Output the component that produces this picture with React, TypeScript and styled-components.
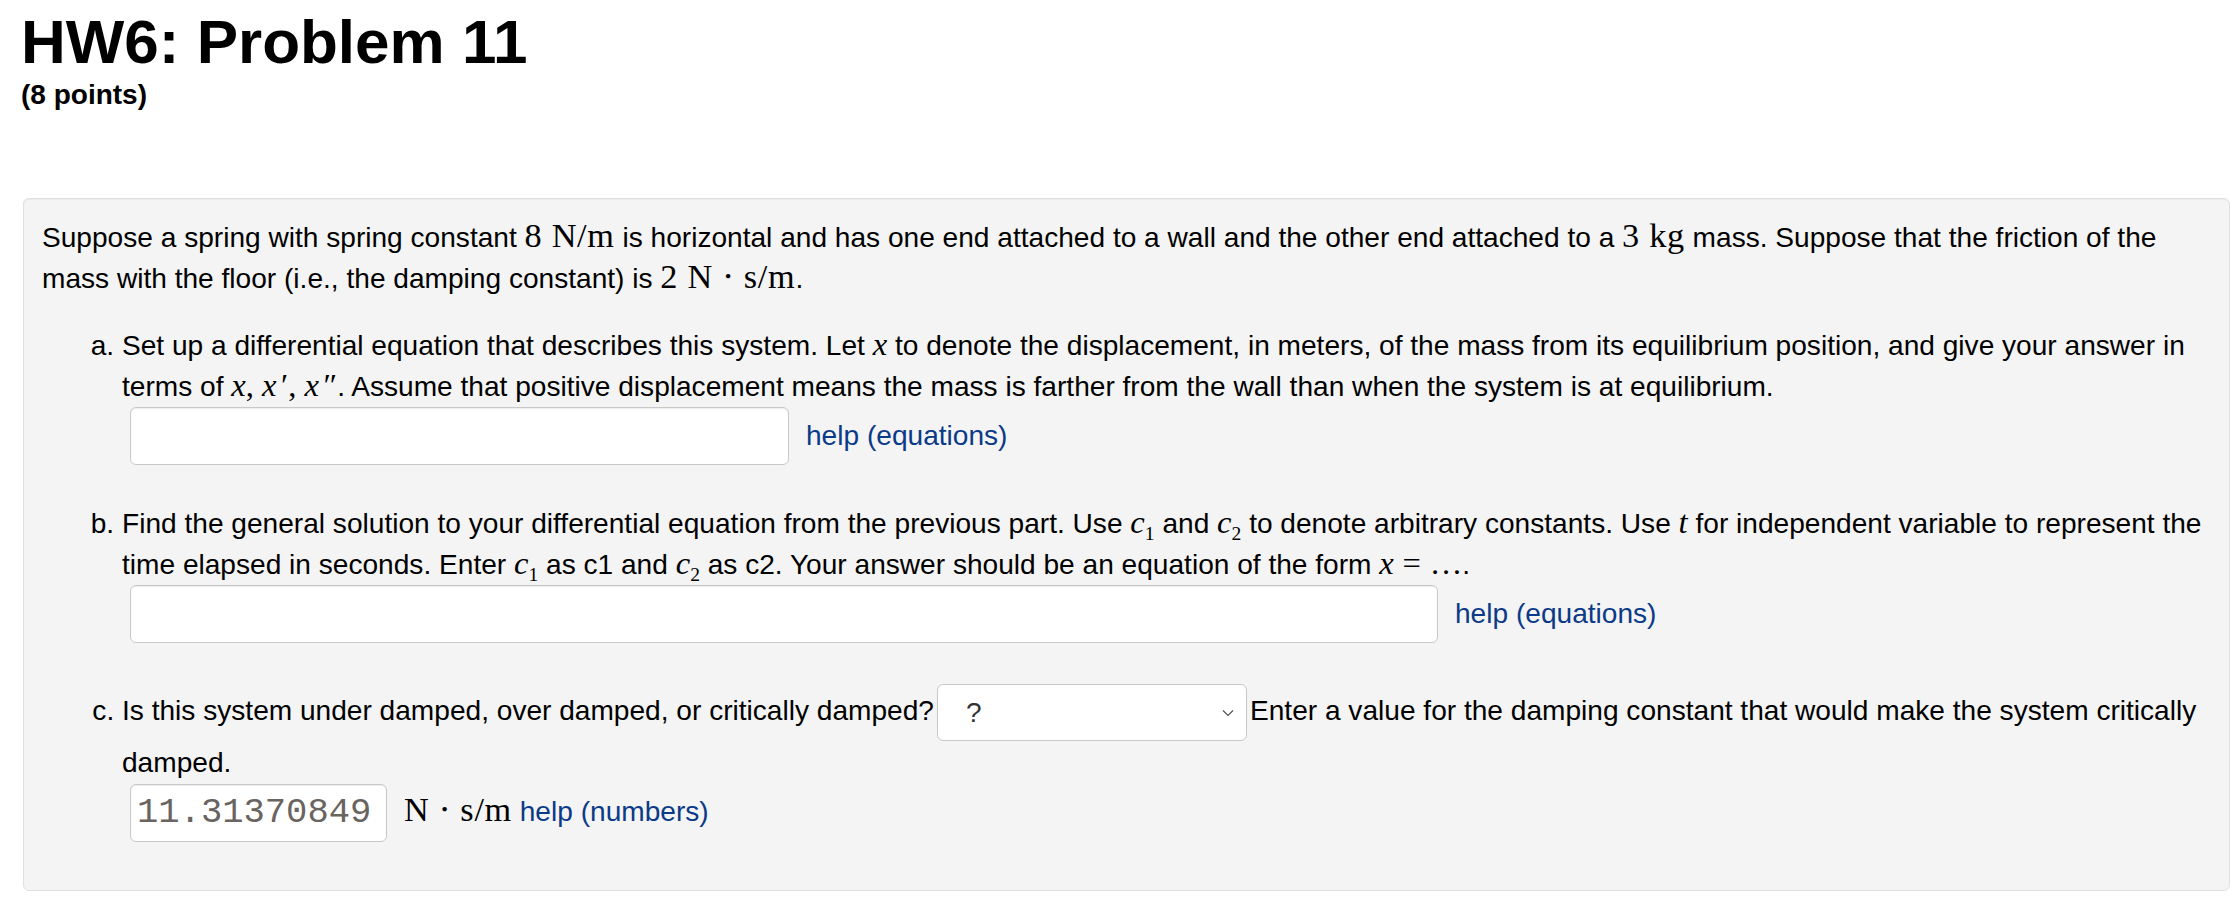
import styled, { createGlobalStyle } from 'styled-components';

const GlobalStyle = createGlobalStyle`
  html, body {
    margin: 0;
    padding: 0;
    background: #fff;
  }
  body {
    font-family: "Liberation Sans", Arial, sans-serif;
    color: #000;
  }
`;

const Page = styled.main`
  padding: 8px 4px 11px 21px;
`;

const Title = styled.h1`
  margin: 0;
  font-size: 62px;
  line-height: 68px;
  font-weight: 700;
`;

const Points = styled.div`
  margin-top: -1px;
  font-size: 28px;
  line-height: 40px;
  font-weight: 700;
`;

const Panel = styled.section`
  margin: 83px 0 0 2px;
  padding: 19px 14px 48px 18px;
  background: #f4f4f4;
  border: 1px solid #e0e0e0;
  border-radius: 6px;
  box-shadow: inset 0 1px 1px rgba(0, 0, 0, 0.04);
  font-size: 28.1px;
  line-height: 40.5px;
`;

const Intro = styled.p`
  margin: 0 0 27px;
`;

const Parts = styled.ol`
  margin: 0;
  padding-left: 80px;
  list-style: lower-alpha;
`;

const Part = styled.li`
  margin-bottom: 39px;

  &:last-child {
    margin-bottom: 0;
  }
`;

const AnswerRow = styled.div`
  display: flex;
  align-items: center;
  gap: 17px;
  height: 58px;
  margin-left: 8px;
`;

const AnswerInput = styled.input<{ $width: number }>`
  box-sizing: border-box;
  width: ${(p) => p.$width}px;
  height: 58px;
  margin: 0;
  padding: 0 6px;
  background: #fff;
  border: 1px solid #c8c8c8;
  border-radius: 6px;
  box-shadow: inset 0 1px 1px rgba(0, 0, 0, 0.075);
  font-family: "Liberation Mono", "Courier New", monospace;
  font-size: 35.5px;
  color: #6a6460;
  outline: none;
`;

const Select = styled.div`
  box-sizing: border-box;
  display: inline-flex;
  align-items: center;
  justify-content: space-between;
  vertical-align: middle;
  width: 310px;
  height: 57px;
  margin: 2px 3px;
  padding: 0 12px 0 28px;
  background: #fff;
  border: 1px solid #c8c8c8;
  border-radius: 6px;
  color: #333;
  line-height: normal;
`;

const HelpLink = styled.a`
  color: #0b3a88;
  text-decoration: none;
  white-space: nowrap;
`;

// $unit: upright units (N/m, kg) are set a touch larger and looser, like the MathJax output
const Math = styled.span<{ $unit?: boolean }>`
  font-family: "Liberation Serif", "DejaVu Serif", serif;
  font-size: ${(p) => (p.$unit ? '1.22em' : '1.16em')};
  letter-spacing: ${(p) => (p.$unit ? '0.02em' : '0')};
  line-height: 0;
  white-space: nowrap;
`;

const Var = styled.i`
  font-family: "Liberation Serif", "DejaVu Serif", serif;
  font-style: italic;
`;

const Op = styled.span`
  margin: 0 0.27em;
`;

const Prime = styled.span`
  margin-left: 0.14em;
  font-style: normal;
`;

const Sub = styled.sub`
  font-size: 0.6em;
  vertical-align: -0.35em;
  line-height: 0;
`;

function Units({ dot }: { dot?: boolean }) {
  return dot ? (
    <>
      N<Op>⋅</Op>s/m
    </>
  ) : (
    <>N/m</>
  );
}

function C({ n }: { n: number }) {
  return (
    <Math>
      <Var>c</Var>
      <Sub>{n}</Sub>
    </Math>
  );
}

function Chevron() {
  return (
    <svg width="12" height="8" viewBox="0 0 12 8" aria-hidden="true">
      <polyline points="1,1.5 6,6.5 11,1.5" fill="none" stroke="#555" strokeWidth="1.2" />
    </svg>
  );
}

export default function App() {
  return (
    <>
      <GlobalStyle />
      <Page>
        <Title>HW6: Problem 11</Title>
        <Points>(8 points)</Points>

        <Panel>
          <Intro>
            Suppose a spring with spring constant{' '}
            <Math $unit>
              8 <Units />
            </Math>{' '}
            is horizontal and has one end attached to a wall and the other end attached to a{' '}
            <Math $unit>3 kg</Math> mass. Suppose that the friction of the mass with the floor (i.e., the
            damping constant) is{' '}
            <Math $unit>
              2 <Units dot />
            </Math>
            .
          </Intro>

          <Parts>
            <Part>
              Set up a differential equation that describes this system. Let{' '}
              <Math>
                <Var>x</Var>
              </Math>{' '}
              to denote the displacement, in meters, of the mass from its equilibrium position, and give
              your answer in terms of{' '}
              <Math>
                <Var>x</Var>, <Var>x</Var>
                <Prime>′</Prime>, <Var>x</Var>
                <Prime>″</Prime>
              </Math>
              . Assume that positive displacement means the mass is farther from the wall than when the
              system is at equilibrium.
              <AnswerRow>
                <AnswerInput $width={659} type="text" aria-label="answer a" />
                <HelpLink href="#">help (equations)</HelpLink>
              </AnswerRow>
            </Part>

            <Part>
              Find the general solution to your differential equation from the previous part. Use <C n={1} />{' '}
              and <C n={2} /> to denote arbitrary constants. Use{' '}
              <Math>
                <Var>t</Var>
              </Math>{' '}
              for independent variable to represent the time elapsed in seconds. Enter <C n={1} /> as c1
              and <C n={2} /> as c2. Your answer should be an equation of the form{' '}
              <Math>
                <Var>x</Var>
                <Op>=</Op>…
              </Math>
              .
              <AnswerRow>
                <AnswerInput $width={1308} type="text" aria-label="answer b" />
                <HelpLink href="#">help (equations)</HelpLink>
              </AnswerRow>
            </Part>

            <Part>
              Is this system under damped, over damped, or critically damped?
              <Select role="combobox" aria-label="damping type">
                <span>?</span>
                <Chevron />
              </Select>
              Enter a value for the damping constant that would make the system critically damped.
              <AnswerRow>
                <AnswerInput $width={257} type="text" readOnly value="11.31370849" aria-label="answer c" />
                <span>
                  <Math $unit>
                    <Units dot />
                  </Math>{' '}
                  <HelpLink href="#">help (numbers)</HelpLink>
                </span>
              </AnswerRow>
            </Part>
          </Parts>
        </Panel>
      </Page>
    </>
  );
}
